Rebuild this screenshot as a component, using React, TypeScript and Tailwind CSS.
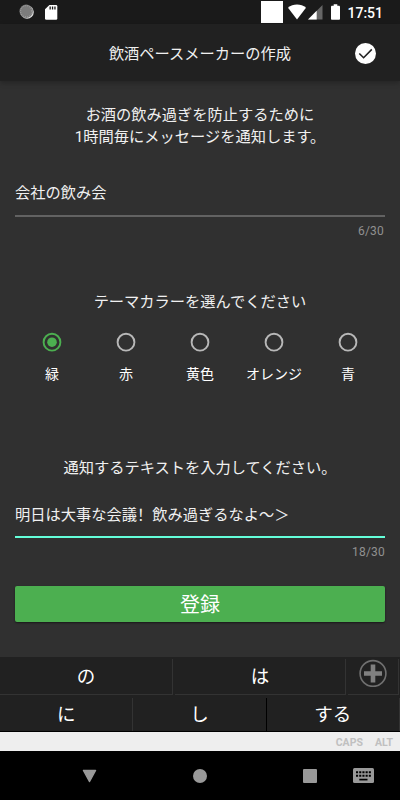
import React from 'react';

interface ThemeColor {
    label: string;
    selected?: boolean;
}

const themeColors: ThemeColor[] = [
    { label: '緑', selected: true },
    { label: '赤' },
    { label: '黄色' },
    { label: 'オレンジ' },
    { label: '青' },
];

const StatusBar: React.FC = () => (
    <div className="h-6 shrink-0 bg-[#1a1a1a] flex items-center text-white">
        <svg className="ml-[19px] shrink-0" width="16" height="16" viewBox="0 0 16 16">
            <circle cx="8.1" cy="8.1" r="6.7" fill="#e0e0e0" />
            <circle cx="7.2" cy="7.3" r="6.7" fill="#7c7c7c" />
            <circle cx="7.2" cy="7.3" r="5.6" fill="none" stroke="#b0b0b0" strokeWidth="0.8" strokeDasharray="1 1.2" />
        </svg>
        <svg className="ml-[10px] shrink-0" width="13" height="16" viewBox="0 0 13 16">
            <path d="M4.4 1H11a1.3 1.3 0 0 1 1.3 1.3v12.2a1.3 1.3 0 0 1-1.3 1.3H1.3A1.3 1.3 0 0 1 0 14.5V5.3z" fill="#fff" />
            <path d="M4.5 2.4h1.3v3H4.5zM6.9 2.4h1.3v3H6.9zM9.3 2.4h1.3v3H9.3z" fill="#1a1a1a" />
        </svg>
        <div className="ml-[203px] size-[22px] shrink-0 bg-white" />
        <svg className="ml-[5px] shrink-0" width="18" height="16" viewBox="0 0 18 16">
            <path d="M9 15.5L0 3.8C2.5 1.7 5.7.6 9 .6s6.5 1.1 9 3.2z" fill="#fff" />
        </svg>
        <svg className="ml-[2px] shrink-0" width="15" height="16" viewBox="0 0 15 16">
            <path d="M14.5 1v14.5H0z" fill="#666" />
            <path d="M8.7 6.8v8.7H0z" fill="#fff" />
        </svg>
        <svg className="ml-[8px] shrink-0" width="9" height="16" viewBox="0 0 9 16">
            <path d="M2.7.3h3.6v1.5h1.6c.6 0 1.1.5 1.1 1.1v11.8c0 .6-.5 1.1-1.1 1.1H1.1c-.6 0-1.1-.5-1.1-1.1V2.9c0-.6.5-1.1 1.1-1.1h1.6z" fill="#fff" />
        </svg>
        <span className="ml-[7.5px] pt-px text-[14px] leading-6 font-medium">17:51</span>
    </div>
);

const Header: React.FC = () => (
    <header className="relative z-10 h-[57px] shrink-0 bg-[#212121] shadow-[0_2px_5px_rgba(0,0,0,0.25)] grid grid-cols-[1fr_auto_1fr] items-center">
        <h1 className="col-start-2 pt-[2px] text-[15.25px] leading-[22px] text-[#f0f0f0]">飲酒ペースメーカーの作成</h1>
        <svg className="justify-self-end mr-6 mt-px" width="21" height="21" viewBox="0 0 21 21">
            <circle cx="10.5" cy="10.5" r="10.5" fill="#fff" />
            <path d="M4.3 10.5l4.3 4.2 8.2-8.3" fill="none" stroke="#212121" strokeWidth="1.6" />
        </svg>
    </header>
);

const ColorPicker: React.FC = () => (
    <div className="mt-[19px] grid grid-cols-5">
        {themeColors.map(color => (
            <div key={color.label} className="flex flex-col items-center">
                <svg width="20" height="20" viewBox="0 0 20 20">
                    <circle cx="10" cy="10.2" r="8.4" fill="none" stroke={color.selected ? '#4caf50' : '#b8b8b8'} strokeWidth="1.9" />
                    {color.selected && <circle cx="10" cy="10.2" r="4.8" fill="#4caf50" />}
                </svg>
                <span className="mt-[12px] text-[14px] leading-[20px] text-white">{color.label}</span>
            </div>
        ))}
    </div>
);

const Keyboard: React.FC = () => (
    <div className="h-[75px] shrink-0 bg-[#212121] text-white text-[18.5px] leading-[26px]">
        <div className="h-[38px] flex pt-[2px]">
            <div className="w-[173px] h-[36px] flex items-center justify-center border-r border-b border-[#333]">の</div>
            <div className="ml-[2px] w-[171px] h-[36px] flex items-center justify-center border-r border-b border-[#333]">は</div>
            <div className="ml-[2px] w-[51px] h-[36px] flex items-start justify-center border-r border-b border-[#333]">
                <svg width="28" height="28" viewBox="0 0 28 28">
                    <circle cx="14" cy="14.5" r="12.9" fill="none" stroke="#707070" strokeWidth="1.6" />
                    <path d="M14 5.5v18M5 14.5h18" stroke="#808080" strokeWidth="4.6" />
                </svg>
            </div>
        </div>
        <div className="h-[37px] flex pt-[3px] border-b border-black">
            <div className="flex-1 flex items-center justify-center border-r border-[#333]">に</div>
            <div className="flex-1 flex items-center justify-center border-r border-black">し</div>
            <div className="flex-1 flex items-center justify-center border-r border-[#333]">する</div>
        </div>
    </div>
);

const NavBar: React.FC = () => (
    <nav className="h-[49px] shrink-0 bg-black flex items-center text-[#999]">
        <svg className="ml-[82px]" width="15" height="14" viewBox="0 0 15 14">
            <path d="M1.5 1.5h12L7.5 12.5z" fill="currentColor" stroke="currentColor" strokeWidth="1.5" strokeLinejoin="round" />
        </svg>
        <div className="ml-[96px] size-[14px] rounded-full bg-[#999]" />
        <div className="ml-[96px] size-[14px] rounded-[1px] bg-[#999]" />
        <svg className="ml-[36px]" width="21" height="15" viewBox="0 0 21 15">
            <rect width="21" height="15" rx="1.5" fill="currentColor" />
            <path d="M3 4.3h15M3 7.7h15" stroke="#000" strokeWidth="2.1" strokeDasharray="2.1 1.1" />
            <path d="M6.3 11.6h8.2" stroke="#000" strokeWidth="1.7" />
        </svg>
    </nav>
);

const App: React.FC = () => {
    return (
        <div className="w-[400px] h-[800px] flex flex-col overflow-hidden bg-[#303030] font-['Roboto','Noto_Sans_CJK_JP',sans-serif]" lang="ja">
            <StatusBar />
            <Header />
            <main className="flex-1 px-[15px] text-[15.25px] leading-[22px] text-[#f0f0f0]">
                <p className="mt-[23px] text-center">
                    お酒の飲み過ぎを防止するために
                    <br />
                    <span>1時間毎にメッセージを通知します。</span>
                </p>
                <div className="mt-[34px] h-[35px] border-b-2 border-[#626262]">会社の飲み会</div>
                <div className="mt-[5px] text-right text-[12px] leading-[18px] text-[#909090] pr-px tracking-[0.2px]">6/30</div>
                <p className="mt-[51px] text-center">テーマカラーを選んでください</p>
                <ColorPicker />
                <p className="mt-[73px] text-center">通知するテキストを入力してください。</p>
                <div className="mt-[24px] h-[35px] leading-[20px] border-b-2 border-[#64ffda]">
                    明日は大事な会議
                    <span lang="zh-CN" className="font-['Noto_Sans_CJK_SC',sans-serif]">！</span>
                    飲み過ぎるなよ〜＞
                </div>
                <div className="mt-[5px] text-right text-[12px] leading-[18px] text-[#909090] tracking-[0.2px]">18/30</div>
                <button className="mt-[25px] w-full h-[36px] rounded-[2px] bg-[#4caf50] text-white text-[20px] leading-[38px] shadow-[0_1px_2px_rgba(0,0,0,0.5)]">登録</button>
            </main>
            <Keyboard />
            <div className="h-[19px] shrink-0 bg-[#eee] flex items-center justify-end gap-[12px] pr-[7px] pt-px text-[10.5px] leading-[19px] font-bold text-[#c0c0c0]">
                <span>CAPS</span>
                <span>ALT</span>
            </div>
            <NavBar />
        </div>
    );
};

export default App;
